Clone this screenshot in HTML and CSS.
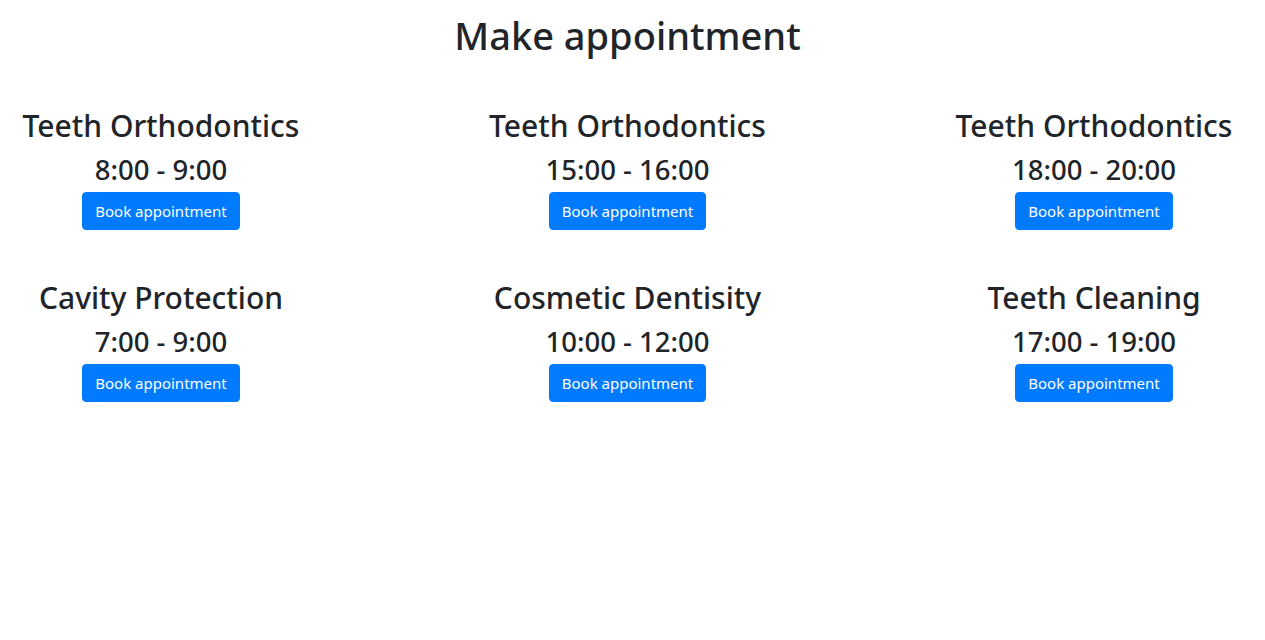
FILE: index.html
```html
<!DOCTYPE html>
<html lang="en">
<head>
<meta charset="utf-8">
<title>Make appointment</title>
<link rel="stylesheet" href="styles.css">
</head>
<body>
<main class="page">
  <h1 class="page-title">Make appointment</h1>
  <div class="slots">
    <div class="slot">
      <h2 class="slot-name">Teeth Orthodontics</h2>
      <h3 class="slot-time">8:00 - 9:00</h3>
      <button class="btn-book" type="button">Book appointment</button>
    </div>
    <div class="slot">
      <h2 class="slot-name">Teeth Orthodontics</h2>
      <h3 class="slot-time">15:00 - 16:00</h3>
      <button class="btn-book" type="button">Book appointment</button>
    </div>
    <div class="slot">
      <h2 class="slot-name">Teeth Orthodontics</h2>
      <h3 class="slot-time">18:00 - 20:00</h3>
      <button class="btn-book" type="button">Book appointment</button>
    </div>
    <div class="slot">
      <h2 class="slot-name">Cavity Protection</h2>
      <h3 class="slot-time">7:00 - 9:00</h3>
      <button class="btn-book" type="button">Book appointment</button>
    </div>
    <div class="slot">
      <h2 class="slot-name">Cosmetic Dentisity</h2>
      <h3 class="slot-time">10:00 - 12:00</h3>
      <button class="btn-book" type="button">Book appointment</button>
    </div>
    <div class="slot">
      <h2 class="slot-name">Teeth Cleaning</h2>
      <h3 class="slot-time">17:00 - 19:00</h3>
      <button class="btn-book" type="button">Book appointment</button>
    </div>
  </div>
</main>
</body>
</html>
```

FILE: styles.css
```css
* { box-sizing: border-box; }

body {
  margin: 0;
  background: #fff;
  color: #212529;
  font-family: "Noto Sans", "Open Sans", sans-serif;
  font-size: 16px;
  line-height: 1.5;
}

.page {
  width: 1255px;
  padding-top: 11px;
}

.page-title {
  margin: 0 0 48px;
  font-size: 38px;
  font-weight: 500;
  line-height: 48px;
  text-align: center;
}

.slots {
  display: grid;
  grid-template-columns: repeat(3, 322px);
  justify-content: space-between;
  row-gap: 49px;
}

.slot {
  display: flex;
  flex-direction: column;
  align-items: center;
  text-align: center;
}

.slot-name {
  margin: 0 0 8px;
  font-size: 30px;
  font-weight: 500;
  line-height: 38px;
}

.slot-time {
  margin: 0 0 5px;
  font-size: 27.5px;
  font-weight: 500;
  line-height: 34px;
}

.btn-book {
  display: inline-block;
  height: 38px;
  padding: 6px 12px;
  border: 1px solid #007bff;
  border-radius: 4px;
  background: #007bff;
  color: #fff;
  font-family: inherit;
  font-size: 15px;
  line-height: 24px;
  cursor: pointer;
}
```
